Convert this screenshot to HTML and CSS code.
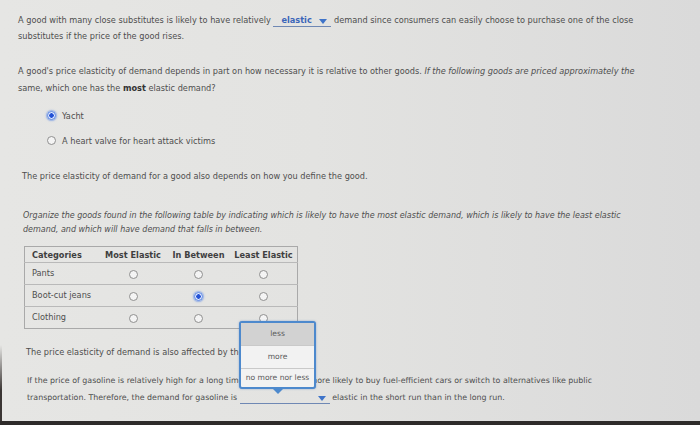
FILE: index.html
```html
<!DOCTYPE html>
<html>
<head>
<meta charset="utf-8">
<link rel="stylesheet" href="styles.css">
</head>
<body>
<div class="page">
  <p class="q1">A good with many close substitutes is likely to have relatively <span class="dd dd-a"><span class="dd-val">elastic</span><span class="tri"></span></span> demand since consumers can easily choose to purchase one of the close<br>substitutes if the price of the good rises.</p>

  <p class="q2">A good's price elasticity of demand depends in part on how necessary it is relative to other goods. <i>If the following goods are priced approximately the</i><br>same, which one has the <b>most</b> elastic demand?</p>

  <div class="options">
    <div class="opt"><span class="radio on"></span><span>Yacht</span></div>
    <div class="opt"><span class="radio"></span><span>A heart valve for heart attack victims</span></div>
  </div>

  <p class="q3">The price elasticity of demand for a good also depends on how you define the good.</p>

  <p class="q4">Organize the goods found in the following table by indicating which is likely to have the most elastic demand, which is likely to have the least elastic<br>demand, and which will have demand that falls in between.</p>

  <table class="grid">
    <tr class="head"><th class="cat">Categories</th><th class="c2">Most Elastic</th><th class="c3">In Between</th><th class="c4">Least Elastic</th></tr>
    <tr><td class="cat">Pants</td><td><span class="radio"></span></td><td><span class="radio"></span></td><td><span class="radio"></span></td></tr>
    <tr><td class="cat">Boot-cut jeans</td><td><span class="radio"></span></td><td><span class="radio on"></span></td><td><span class="radio"></span></td></tr>
    <tr><td class="cat">Clothing</td><td><span class="radio"></span></td><td><span class="radio"></span></td><td><span class="radio"></span></td></tr>
  </table>

  <p class="q5">The price elasticity of demand is also affected by the time horizon.</p>

  <p class="q6">If the price of gasoline is relatively high for a long time, consumers are more likely to buy fuel-efficient cars or switch to alternatives like public<br>transportation. Therefore, the demand for gasoline is <span class="dd dd-b"><span class="dd-val"></span><span class="tri"></span></span> elastic in the short run than in the long run.</p>

  <div class="popup">
    <div class="item sel">less</div>
    <div class="item">more</div>
    <div class="item last">no more nor less</div>
    <span class="pointer"></span>
  </div>
  <div class="edge-left"></div>
</div>
<div class="edge"></div>
</body>
</html>
```
FILE: styles.css
```css
html, body {
  margin: 0;
  padding: 0;
}
body {
  width: 700px;
  height: 425px;
  overflow: hidden;
  background: linear-gradient(90deg, #e6e6e4 0%, #e3e3e1 45%, #dadada 100%);
  font-family: "DejaVu Sans", Verdana, sans-serif;
  font-size: 8.2px;
  color: #4e4e4e;
}
.page {
  position: relative;
  height: 421px;
  padding: 12px 0 0 18px;
  box-sizing: border-box;
}
p {
  margin: 0;
  white-space: nowrap;
}
.q1 {
  line-height: 16px;
}
.q2 {
  margin-top: 19px;
  line-height: 17px;
}
.q2 i { font-style: italic; }
.q2 b { color: #333; }
.dd {
  display: inline-block;
  position: relative;
  border-bottom: 1px solid #6f88b4;
  height: 11px;
  line-height: 11px;
  vertical-align: baseline;
}
.dd-a { width: 58px; }
.dd-b { width: 90px; }
.dd-val {
  color: #3b66b9;
  font-weight: bold;
  padding-left: 8px;
}
.tri {
  position: absolute;
  right: 4px;
  top: 4px;
  width: 0;
  height: 0;
  border-left: 4px solid transparent;
  border-right: 4px solid transparent;
  border-top: 5px solid #3f74c9;
}
.options {
  margin-top: 12px;
  padding-left: 29px;
}
.opt {
  display: flex;
  align-items: center;
  gap: 6px;
  height: 13px;
}
.opt + .opt {
  margin-top: 12px;
}
.radio {
  display: inline-block;
  width: 9px;
  height: 9px;
  border-radius: 50%;
  border: 1px solid #8f8f8f;
  background: #f4f4f4;
  box-sizing: border-box;
  vertical-align: middle;
}
.radio.on {
  border: 1px solid #5a86e6;
  background: radial-gradient(circle, #2452d6 0 2px, #dfe8fb 2.5px);
  box-shadow: 0 0 1.5px 1px rgba(80, 130, 230, 0.55);
}
.q3 {
  margin-top: 22px;
  padding-left: 4px;
  line-height: 14px;
}
.q4 {
  margin-top: 26px;
  padding-left: 5px;
  font-style: italic;
  font-size: 8px;
  line-height: 14px;
}
.grid {
  margin: 9px 0 0 6px;
  width: 272px;
  border-collapse: collapse;
  border: 1px solid #a9a9a9;
  table-layout: fixed;
}
.grid th, .grid td {
  padding: 0;
  text-align: center;
}
.grid th {
  font-weight: bold;
  color: #3f3f3f;
  height: 15px;
  vertical-align: middle;
}
.grid td {
  height: 21px;
  border-top: 1px solid #b9b9b9;
  vertical-align: middle;
}
.grid .cat {
  text-align: left;
  padding-left: 7px;
  width: 67px;
}
.grid .c2 { width: 68px; }
.grid .c3 { width: 63px; }
.grid .c4 { width: 67px; }
.grid td.cat {
  padding-bottom: 2px;
  height: 19px;
}
.q5 {
  margin-top: 15px;
  padding-left: 8px;
  line-height: 16px;
}
.q6 {
  margin-top: 12px;
  padding-left: 9px;
  line-height: 17px;
  font-size: 7.9px;
}
.popup {
  position: absolute;
  left: 239px;
  top: 321px;
  width: 77px;
  height: 68px;
  border: 2px solid #4d89cd;
  border-radius: 3px;
  background: #f2f2f2;
  box-sizing: border-box;
  box-shadow: 0 0 2px rgba(60, 110, 190, 0.5);
}
.item {
  height: 22px;
  line-height: 22px;
  text-align: center;
  border-top: 1px solid #c9c9c9;
  color: #5a5a5a;
  font-size: 7.6px;
}
.item.sel {
  border-top: none;
  background: #d2d2d2;
}
.item.last {
  height: 19px;
  line-height: 17px;
}
.pointer {
  position: absolute;
  left: 32px;
  bottom: -7px;
  width: 0;
  height: 0;
  border-left: 5px solid transparent;
  border-right: 5px solid transparent;
  border-top: 5px solid #4d89cd;
}
.edge-left {
  position: absolute;
  left: 0;
  top: 345px;
  bottom: 0;
  width: 2px;
  background: linear-gradient(180deg, rgba(60, 55, 50, 0) 0%, #3a3533 60%);
}
.edge {
  height: 4px;
  background: #2e2b2a;
}
```
